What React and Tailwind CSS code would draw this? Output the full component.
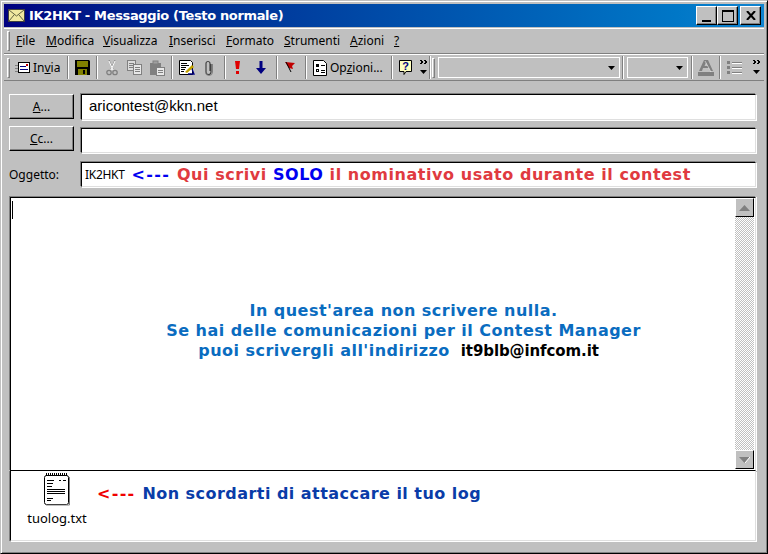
import React from "react";

const ui = "font-['Noto_Sans','Liberation_Sans',sans-serif]";
const big = "font-['DejaVu_Sans',sans-serif] font-bold";

const Sep = ({ className = "" }) => (
  <div className={`w-[2px] h-[23px] shrink-0 border-l border-r border-l-[#808080] border-r-white ${className}`} />
);

const Grip = ({ className = "" }) => (
  <div className={`w-[3px] h-[20px] shrink-0 border border-t-white border-l-white border-r-[#808080] border-b-[#808080] ${className}`} />
);

const Chevrons = ({ className = "" }) => (
  <svg width="9" height="17" viewBox="0 0 9 17" className={`shrink-0 ${className}`}>
    <path d="M1 1l2 2-2 2M2 1l2 2-2 2M5 1l2 2-2 2M6 1l2 2-2 2" stroke="#000" fill="none" />
    <path d="M1 11h7l-3.500 4z" fill="#000" />
  </svg>
);

const SendIcon = () => (
  <svg width="15" height="12" viewBox="0 0 15 12" className="shrink-0 ml-[5px]">
    <path d="M0 3.500h3M0 6.500h3M0 9.500h3" stroke="#808080" />
    <rect x="3.500" y="0.500" width="11" height="10" fill="#fff" stroke="#000" />
    <path d="M5 4.500h6M5 7.500h8" stroke="#000080" />
    <rect x="11" y="2" width="2" height="2" fill="#c00000" />
  </svg>
);

const SaveIcon = () => (
  <svg width="15" height="15" viewBox="0 0 15 15" className="shrink-0 ml-[6px]">
    <path d="M0 0h14l1 1v14H0z" fill="#000" />
    <rect x="2" y="1" width="11" height="6" fill="#808000" />
    <rect x="3" y="9" width="9" height="6" fill="#808000" />
    <rect x="8" y="10" width="2" height="4" fill="#000" />
  </svg>
);

const CutIcon = () => (
  <svg width="12" height="16" viewBox="0 0 12 16" className="shrink-0 ml-[8px]">
    <path d="M3 0l4 9M9 0L5 9" stroke="#808080" />
    <path d="M3 1l4 9M9 1L5 10" stroke="#fff" />
    <circle cx="3" cy="12.500" r="2.200" fill="none" stroke="#808080" strokeWidth="1.300" />
    <circle cx="9" cy="12.500" r="2.200" fill="none" stroke="#808080" strokeWidth="1.300" />
  </svg>
);

const CopyIcon = () => (
  <svg width="15" height="15" viewBox="0 0 15 15" className="shrink-0 ml-[9px]">
    <rect x="0.500" y="0.500" width="8" height="10" fill="#dcdcdc" stroke="#808080" />
    <path d="M2 3.500h5M2 5.500h5M2 7.500h5" stroke="#808080" />
    <rect x="6.500" y="4.500" width="8" height="10" fill="#e8e8e8" stroke="#808080" />
    <path d="M8 7.500h5M8 9.500h5M8 11.500h5" stroke="#808080" />
  </svg>
);

const PasteIcon = () => (
  <svg width="16" height="16" viewBox="0 0 16 16" className="shrink-0 ml-[7px]">
    <path d="M1 3h11v12H1z" fill="#808080" />
    <rect x="4" y="1" width="5" height="3" fill="#a0a0a0" stroke="#808080" />
    <rect x="7.500" y="7.500" width="8" height="8" fill="#e8e8e8" stroke="#808080" />
    <path d="M9 10.500h5M9 12.500h5" stroke="#808080" />
  </svg>
);

const FormIcon = () => (
  <svg width="16" height="15" viewBox="0 0 16 15" className="shrink-0 ml-[6px]">
    <path d="M0.500 0.500h11l2 2v12H0.500z" fill="#fff" stroke="#000" />
    <path d="M2 3.500h6M2 5.500h8M2 7.500h5M2 9.500h4M2 11.500h3" stroke="#000" />
    <path d="M6 12l7-7 2 2-7 6z" fill="#c0a000" />
    <path d="M13 9l2 5H9" stroke="#000080" fill="none" strokeWidth="1.300" />
  </svg>
);

const ClipIcon = () => (
  <svg width="10" height="16" viewBox="0 0 10 16" className="shrink-0 ml-[9px]">
    <path d="M7 4v8a2.500 2.500 0 0 1-5 0V3.500a2 2 0 0 1 4 0V11" fill="none" stroke="#404040" strokeWidth="1.200" />
    <path d="M8.500 4v8a3.500 3.500 0 0 1-7 0" fill="none" stroke="#808080" />
  </svg>
);

const ImportantIcon = () => (
  <svg width="5" height="14" viewBox="0 0 5 14" className="shrink-0 ml-[9px]">
    <path d="M0 0h5L4 8H1z" fill="#e00000" />
    <rect x="1" y="10" width="3" height="3" fill="#e00000" />
  </svg>
);

const LowIcon = () => (
  <svg width="10" height="13" viewBox="0 0 10 13" className="shrink-0 ml-[16px]">
    <path d="M3.500 0h3v7H10l-5 6-5-6h3.500z" fill="#000080" />
  </svg>
);

const FlagIcon = () => (
  <svg width="11" height="11" viewBox="0 0 11 11" className="shrink-0 ml-[7px]">
    <path d="M0 0l10 1-3 3 1 3-4-1z" fill="#c00000" />
    <path d="M1 0l5 10" stroke="#000" />
  </svg>
);

const OptionsIcon = () => (
  <svg width="14" height="16" viewBox="0 0 14 16" className="shrink-0 ml-[6px]">
    <path d="M0.500 0.500h10l3 3v12H0.500z" fill="#fff" stroke="#000" />
    <rect x="3" y="4" width="3" height="3" fill="#000" />
    <path d="M8 5.500h4" stroke="#000" />
    <rect x="3.500" y="9.500" width="2" height="2" fill="none" stroke="#000" />
    <path d="M8 10.500h4M8 12.500h4" stroke="#000" />
  </svg>
);

const HelpIcon = () => (
  <svg width="14" height="16" viewBox="0 0 14 16" className="shrink-0 ml-[6px]">
    <path d="M0.500 0.500h12v11H7l-2 3v-3H0.500z" fill="#ffffc0" stroke="#000" />
    <text x="6.500" y="10" textAnchor="middle" fontSize="11" fontWeight="700" fill="#000080" fontFamily="Liberation Sans">?</text>
  </svg>
);

const Combo = ({ className = "" }) => (
  <div className={`h-[21px] shrink-0 border border-white flex items-center justify-end pr-[4px] ${className}`}>
    <svg width="7" height="4" viewBox="0 0 7 4"><path d="M0 0h7L3.500 4z" fill="#000" /></svg>
  </div>
);

const FontColorIcon = () => (
  <svg width="16" height="16" viewBox="0 0 16 16" className="shrink-0 ml-[5px]">
    <path d="M6 0h4l5 11h-3l-1-3H5l-1 3H1zM6.500 6h3L8 2.500z" fill="#808080" fillRule="evenodd" />
    <path d="M7 1l6 11" stroke="#fff" strokeOpacity="0.500" />
    <rect x="0" y="12" width="16" height="4" fill="#808080" />
  </svg>
);

const ListIcon = () => (
  <svg width="15" height="13" viewBox="0 0 15 13" className="shrink-0 ml-[6px]">
    <path d="M0 0h3v3H0zM0 5h3v3H0zM0 10h3v3H0z" fill="#808080" />
    <path d="M5 1.500h10M5 6.500h10M5 11.500h10" stroke="#808080" />
    <path d="M5 2.500h10M5 7.500h10M5 12.500h10" stroke="#fff" />
  </svg>
);

const NotepadIcon = () => (
  <svg width="28" height="33" viewBox="0 0 28 33" className="shrink-0">
    <rect x="1.500" y="2.500" width="24" height="29" rx="2" fill="#fff" stroke="#000" />
    <path d="M26.500 4v28H3" stroke="#808080" fill="none" />
    <path d="M3 1.500h22" stroke="#000" strokeDasharray="1 1" strokeWidth="3" />
    <path d="M4 7.500h7M16 7.500h2M20 7.500h3M4 10.500h6M4 13.500h5M4 16.500h18M4 18.500h18M4 20.500h18M4 25.500h6M4 27.500h4" stroke="#000" />
  </svg>
);

const ScrollButton = ({ down }) => (
  <div className="w-[19px] h-[19px] shrink-0 bg-[#c0c0c0] border border-t-white border-l-white border-r-[#000] border-b-[#000] flex items-center justify-center">
    <svg width="11" height="6" viewBox="0 0 11 6">
      {down ? (
        <>
          <path d="M0 0h11L5.500 6z" fill="#808080" />
          <path d="M6 6l5-6" stroke="#fff" />
        </>
      ) : (
        <path d="M0 6h11L5.500 0z" fill="#808080" />
      )}
    </svg>
  </div>
);

const Field = ({ className = "", children }) => (
  <div className={`border border-t-black border-l-black border-r-[#dfdfdf] border-b-[#dfdfdf] bg-white shadow-[-1px_-1px_0_#808080,1px_1px_0_#fff] flex items-center ${className}`}>
    {children}
  </div>
);

const AddressButton = ({ children, className = "" }) => (
  <button className={`w-[65px] h-[25px] shrink-0 bg-[#c0c0c0] border border-t-white border-l-white border-r-black border-b-black text-[12px] text-black shadow-[inset_-1px_-1px_0_#808080] ${className}`}>
    {children}
  </button>
);

export default function App() {
  return (
    <div className={`w-[768px] h-[554px] overflow-hidden bg-[#c0c0c0] border border-t-[#c0c0c0] border-l-[#c0c0c0] border-r-[#000] border-b-[#000] shadow-[inset_1px_1px_0_#fff,inset_-1px_-1px_0_#808080] px-[3px] pt-[3px] flex flex-col ${ui}`}>
      {/* title bar */}
      <div className="h-[23px] shrink-0 bg-gradient-to-r from-[#000080] to-[#1084d0] flex items-center pl-[4px] pr-[3px]">
        <svg width="17" height="13" viewBox="0 0 17 13" className="shrink-0">
          <rect x="0.500" y="0.500" width="16" height="12" fill="#f0e8a0" stroke="#404040" />
          <path d="M1 1l7.500 6L16 1M1 12l5-6M16 12l-5-6" fill="none" stroke="#606040" />
        </svg>
        <span className={`ml-[4px] text-[13px] leading-[23px] tracking-[-0.35px] text-white whitespace-nowrap ${big}`}>IK2HKT - Messaggio (Testo normale)</span>
        <div className="ml-auto flex">
          {["min", "max"].map((k) => (
            <div key={k} className="w-[21px] h-[19px] bg-[#c0c0c0] border border-t-white border-l-white border-r-black border-b-black shadow-[inset_-1px_-1px_0_#808080] flex items-center justify-center">
              {k === "min" ? (
                <div className="w-[9px] h-[2px] bg-black mt-[10px]" />
              ) : (
                <div className="w-[12px] h-[12px] border border-black border-t-2" />
              )}
            </div>
          ))}
          <div className="ml-[2px] w-[21px] h-[19px] bg-[#c0c0c0] border border-t-white border-l-white border-r-black border-b-black shadow-[inset_-1px_-1px_0_#808080] flex items-center justify-center">
            <svg width="10" height="9" viewBox="0 0 10 9"><path d="M1 0l8 9M9 0L1 9" stroke="#000" strokeWidth="2" /></svg>
          </div>
        </div>
      </div>

      {/* menu bar */}
      <div className="h-[26px] shrink-0 mt-px border-t border-t-white border-b border-b-[#808080] flex items-center pl-[3px] text-[12px] text-black">
        <Grip className="mr-[6px]" />
        {[
          ["F", "ile", "w-[30px]"],
          ["M", "odifica", "w-[57px]"],
          ["V", "isualizza", "w-[66px]"],
          ["I", "nserisci", "w-[57px]"],
          ["F", "ormato", "w-[58px]"],
          ["S", "trumenti", "w-[66px]"],
          ["A", "zioni", "w-[44px]"],
          ["?", "", "w-[12px]"],
        ].map(([u, rest, w]) => (
          <span key={u + rest} className={`${w} shrink-0 whitespace-nowrap`}>
            <u>{u}</u>{rest}
          </span>
        ))}
      </div>

      {/* toolbar */}
      <div className="h-[27px] shrink-0 border-t border-t-white border-b border-b-[#808080] flex items-center pl-[3px] text-[12px] text-black">
        <Grip />
        <SendIcon />
        <span className="ml-[3px] w-[26px] shrink-0 whitespace-nowrap">In<u>v</u>ia</span>
        <Sep className="ml-[8px]" />
        <SaveIcon />
        <Sep className="ml-[6px]" />
        <CutIcon />
        <CopyIcon />
        <PasteIcon />
        <Sep className="ml-[6px]" />
        <FormIcon />
        <ClipIcon />
        <Sep className="ml-[10px]" />
        <ImportantIcon />
        <LowIcon />
        <Sep className="ml-[10px]" />
        <FlagIcon />
        <Sep className="ml-[9px]" />
        <OptionsIcon />
        <span className="ml-[3px] w-[54px] shrink-0 whitespace-nowrap">Op<u>z</u>ioni...</span>
        <Sep className="ml-[7px]" />
        <HelpIcon />
        <Chevrons className="ml-[6px]" />
        <Sep className="ml-px" />
        <Grip className="ml-px" />
        <Combo className="ml-[3px] w-[182px]" />
        <Sep className="ml-[2px]" />
        <Combo className="ml-[3px] w-[61px]" />
        <Sep className="ml-[3px]" />
        <FontColorIcon />
        <Sep className="ml-[5px]" />
        <ListIcon />
        <Chevrons className="ml-[10px]" />
      </div>

      {/* address rows */}
      <div className="flex items-start mt-[13px] pl-[5px] h-[26px] shrink-0">
        <AddressButton><u>A</u>...</AddressButton>
        <Field className="ml-[7px] w-[675px] h-[26px] pl-[7px] pb-[2px] text-[15px] text-black font-['Liberation_Sans',sans-serif]">aricontest@kkn.net</Field>
      </div>
      <div className="flex items-start mt-[6px] pl-[5px] h-[27px] shrink-0">
        <AddressButton><u>C</u>c...</AddressButton>
        <Field className="ml-[7px] mt-[2px] w-[675px] h-[25px]" />
      </div>
      <div className="flex items-center mt-[9px] pl-[5px] h-[25px] shrink-0">
        <span className="w-[72px] shrink-0 text-[12px] text-black">Oggetto:</span>
        <Field className="w-[675px] h-[25px] pl-[3px] whitespace-nowrap">
          <span className="text-[12px] tracking-[-0.3px] text-black">IK2HKT</span>
          <span className={`ml-[7px] text-[16px] tracking-[0.55px] ${big}`}>
            <span className="text-[#0000f0] tracking-[1.3px]">&lt;--- </span>
            <span className="text-[#e03a40]">Qui scrivi </span>
            <span className="text-[#0000f0]">SOLO </span>
            <span className="text-[#e03a40]">il nominativo usato durante il contest</span>
          </span>
        </Field>
      </div>

      {/* message body */}
      <div className="mt-[10px] ml-[6px] w-[746px] h-[274px] shrink-0 bg-white border border-t-black border-l-black border-r-[#dfdfdf] border-b-black shadow-[-1px_-1px_0_#808080,1px_0_0_#fff] flex">
        <div className="flex-1 min-w-0 pl-px pt-[3px]">
          <div className="w-px h-[18px] bg-black" />
          <div className={`mt-[82px] pl-[60px] text-center text-[16px] leading-[20px] tracking-[0.47px] text-[#0a6cc0] ${big}`}>
            <div>In quest'area non scrivere nulla.</div>
            <div>Se hai delle comunicazioni per il Contest Manager</div>
            <div className="pr-[10px]">
              puoi scrivergli all'indirizzo <span className="ml-[5px] text-[15px] tracking-[-0.1px] text-black">it9blb@infcom.it</span>
            </div>
          </div>
        </div>
        <div className="w-[19px] shrink-0 mr-px mb-px flex flex-col shadow-[inset_0_1px_0_#000]">
          <ScrollButton />
          <div className="flex-1 bg-[repeating-conic-gradient(#c0c0c0_0_25%,#fff_0_50%)] bg-[length:2px_2px]" />
          <ScrollButton down />
        </div>
      </div>

      {/* attachments */}
      <div className="ml-[6px] w-[746px] h-[70px] shrink-0 bg-white border-l border-l-black border-r border-r-[#dfdfdf] border-b border-b-[#dfdfdf] shadow-[-1px_0_0_#808080,1px_1px_0_#fff] flex items-start">
        <div className="w-[86px] pl-[6px] shrink-0 flex flex-col items-center pt-[2px]">
          <NotepadIcon />
          <span className="mt-[3px] text-[13px] leading-[18px] text-black">tuolog.txt</span>
        </div>
        <div className={`mt-[13px] text-[16px] leading-[20px] tracking-[0.46px] whitespace-nowrap ${big}`}>
          <span className="text-[#f00000] tracking-[1.3px]">&lt;--- </span>
          <span className="text-[#0a3ca8]">Non scordarti di attaccare il tuo log</span>
        </div>
      </div>
    </div>
  );
}
